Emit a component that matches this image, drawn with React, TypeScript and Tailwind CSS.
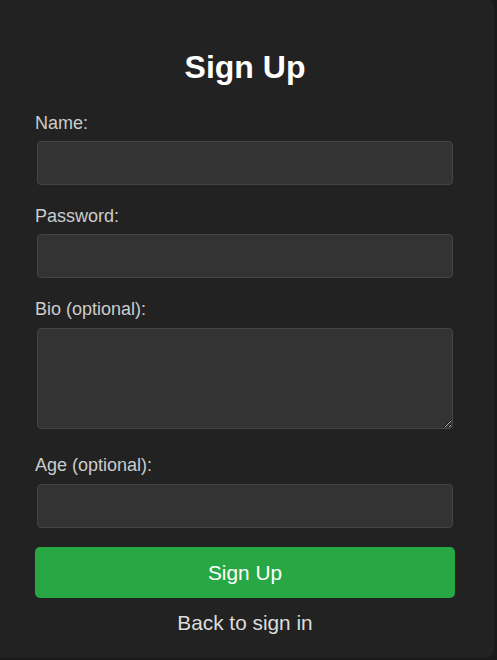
export default function App() {
  const field =
    'block mx-[2px] w-[416px] rounded-[4px] border border-[#444] bg-[#333] px-2 text-[16px] text-white outline-none';
  const label = 'block text-[18px] leading-[21px] text-[#ccc]';

  return (
    <div className="h-[660px] w-[497px] bg-[#1a1a1a] font-['Liberation_Sans',Arial,sans-serif]">
      <div className="h-[658px] w-[494px] rounded-r-lg bg-[#222] pl-[35px] pr-[39px] pt-[49px]">
        <h1 className="text-center text-[32px] font-bold leading-[37px] text-white">Sign Up</h1>
        <form className="mt-[27px]" onSubmit={(e) => e.preventDefault()}>
          <label className={label}>Name:</label>
          <input type="text" className={`${field} mt-[7px] h-[44px]`} />

          <label className={`${label} mt-[21px]`}>Password:</label>
          <input type="password" className={`${field} mt-[7px] h-[44px]`} />

          <label className={`${label} mt-[21px]`}>Bio (optional):</label>
          <textarea className={`${field} mt-[8px] h-[101px] resize-y`} />

          <label className={`${label} mt-[26px]`}>Age (optional):</label>
          <input type="number" className={`${field} mt-[8px] h-[44px]`} />

          <button
            type="submit"
            className="mt-[19px] block h-[51px] w-[420px] rounded-[5px] bg-[#28a745] text-[20.8px] text-white"
          >
            Sign Up
          </button>
        </form>
        <p className="mt-[13px] text-center text-[20.8px] leading-[24px] text-[#ddd]">Back to sign in</p>
      </div>
    </div>
  );
}
